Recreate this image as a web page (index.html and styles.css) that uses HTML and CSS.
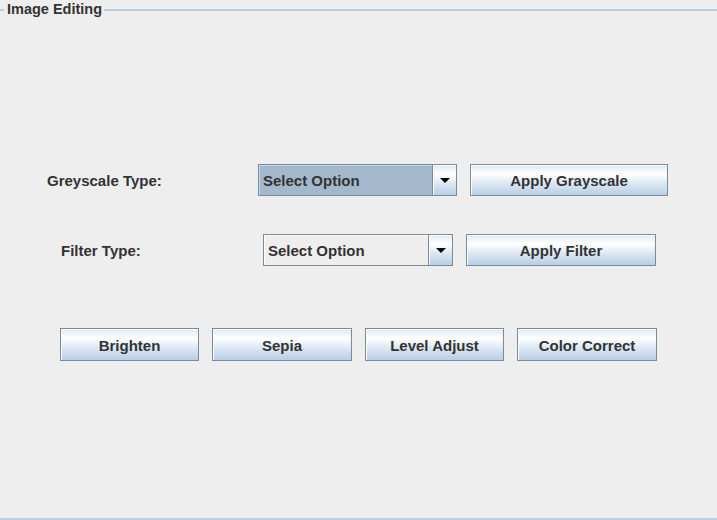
FILE: index.html
```html
<!DOCTYPE html>
<html>
<head>
<meta charset="utf-8">
<link rel="stylesheet" href="styles.css">
</head>
<body>
<fieldset class="panel">
  <legend class="title">Image Editing</legend>
  <div class="row row-grey">
    <div class="label label-grey">Greyscale Type:</div>
    <div class="combo combo-grey selected">
      <div class="combo-text">Select Option</div>
      <div class="combo-arrow"><svg width="10" height="5" viewBox="0 0 10 5"><path d="M0 0H10L5 5Z" fill="#000"/></svg></div>
    </div>
    <button class="btn btn-grey">Apply Grayscale</button>
  </div>
  <div class="row row-filter">
    <div class="label label-filter">Filter Type:</div>
    <div class="combo combo-filter">
      <div class="combo-text">Select Option</div>
      <div class="combo-arrow"><svg width="10" height="5" viewBox="0 0 10 5"><path d="M0 0H10L5 5Z" fill="#000"/></svg></div>
    </div>
    <button class="btn btn-filter">Apply Filter</button>
  </div>
  <div class="row row-actions">
    <button class="btn btn-act w139">Brighten</button>
    <button class="btn btn-act w140">Sepia</button>
    <button class="btn btn-act w139">Level Adjust</button>
    <button class="btn btn-act w140">Color Correct</button>
  </div>
</fieldset>
</body>
</html>
```

FILE: styles.css
```css
html, body {
  margin: 0;
  padding: 0;
  background: #eeeeee;
  width: 717px;
  height: 520px;
  overflow: hidden;
  font-family: "Liberation Sans", Arial, sans-serif;
  font-weight: bold;
  font-size: 15px;
  color: #333333;
}

.panel {
  box-sizing: border-box;
  margin: 1px 0 0 0;
  padding: 0;
  height: 519px;
  width: 717px;
  border: none;
  border-top: 2px solid #b8cfe5;
  border-bottom: 2px solid #b8cfe5;
  min-inline-size: 0;
}

.title {
  margin-left: 4px;
  padding: 0 2px 0 3px;
  line-height: 17px;
  font-size: 14.5px;
  font-weight: bold;
  color: #333333;
}

.row {
  display: flex;
  align-items: center;
}

.row-grey {
  margin-top: 146px;
  padding-left: 47px;
}

.row-filter {
  margin-top: 38px;
  padding-left: 61px;
}

.row-actions {
  margin-top: 62px;
  padding-left: 60px;
  gap: 13px;
}

.label {
  padding-top: 1px;
}
.label-grey { width: 211px; }
.label-filter { width: 202px; }

.combo {
  box-sizing: border-box;
  height: 32px;
  display: flex;
  border: 1px solid #7a8a99;
  background: #eeeeee;
  box-shadow: inset 1px 1px 0 #ffffff;
}

.combo-grey { width: 199px; }
.combo-filter { width: 190px; }

.combo-text {
  flex: 1;
  display: flex;
  align-items: center;
  padding-left: 4px;
  line-height: 17px;
  border-right: 1px solid #7a8a99;
}

.combo.selected .combo-text {
  background: #a3b8cc;
  box-shadow: inset 1px 1px 0 #c8d6e3;
}

.combo-arrow {
  width: 23px;
  display: flex;
  align-items: center;
  justify-content: center;
  background: linear-gradient(to bottom, #dde8f3 0%, #ffffff 30%, #dde8f3 60%, #b8cfe5 100%);
  box-shadow: inset 1px 1px 0 #ffffff;
}

.combo-arrow svg {
  display: block;
  margin-top: 1px;
}

.btn {
  box-sizing: border-box;
  height: 32px;
  margin: 0;
  padding: 1px 0 0 0;
  border: 1px solid #7a8a99;
  background: linear-gradient(to bottom, #dde8f3 0%, #ffffff 30%, #dde8f3 60%, #b8cfe5 100%);
  box-shadow: inset 1px 1px 0 #ffffff;
  font-family: "Liberation Sans", Arial, sans-serif;
  font-weight: bold;
  font-size: 15px;
  color: #333333;
  text-align: center;
}

.btn-grey { width: 198px; margin-left: 13px; }
.btn-filter { width: 190px; margin-left: 13px; }

.btn-act { height: 33px; }
.w139 { width: 139px; }
.w140 { width: 140px; }
```
